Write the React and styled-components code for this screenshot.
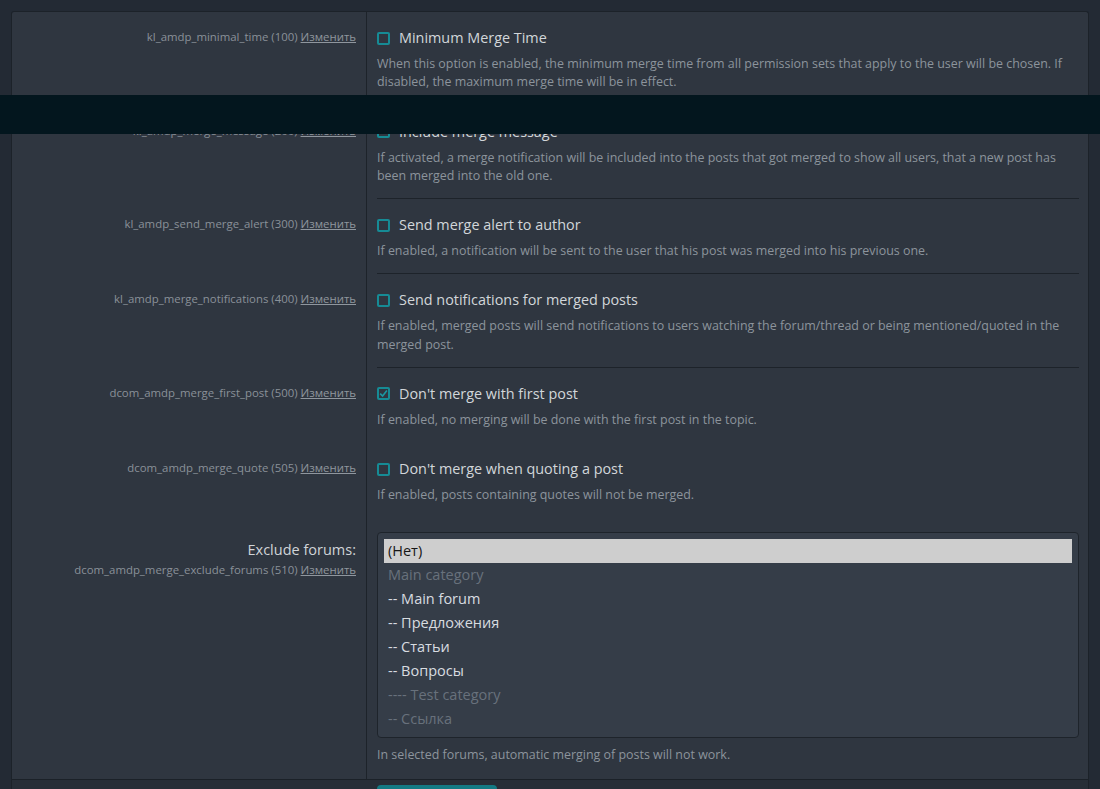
import React from "react";
import styled, { createGlobalStyle } from "styled-components";

const GlobalStyle = createGlobalStyle`
  html, body {
    margin: 0;
    padding: 0;
    background: #232a34;
  }
  body {
    font-family: "Open Sans", "Noto Sans", sans-serif;
    color: #d2d6da;
  }
  * { box-sizing: border-box; }
`;

const rows = [
  {
    key: "kl_amdp_minimal_time",
    order: 100,
    title: "Minimum Merge Time",
    explain:
      "When this option is enabled, the minimum merge time from all permission sets that apply to the user will be chosen. If disabled, the maximum merge time will be in effect.",
    sep: true,
  },
  {
    key: "kl_amdp_merge_message",
    order: 200,
    title: "Include merge message",
    explain:
      "If activated, a merge notification will be included into the posts that got merged to show all users, that a new post has been merged into the old one.",
    sep: true,
  },
  {
    key: "kl_amdp_send_merge_alert",
    order: 300,
    title: "Send merge alert to author",
    explain: "If enabled, a notification will be sent to the user that his post was merged into his previous one.",
    sep: true,
  },
  {
    key: "kl_amdp_merge_notifications",
    order: 400,
    title: "Send notifications for merged posts",
    explain:
      "If enabled, merged posts will send notifications to users watching the forum/thread or being mentioned/quoted in the merged post.",
    sep: true,
  },
  {
    key: "dcom_amdp_merge_first_post",
    order: 500,
    title: "Don't merge with first post",
    explain: "If enabled, no merging will be done with the first post in the topic.",
    checked: true,
  },
  {
    key: "dcom_amdp_merge_quote",
    order: 505,
    title: "Don't merge when quoting a post",
    explain: "If enabled, posts containing quotes will not be merged.",
  },
];

const forums = [
  { label: "(Нет)", selected: true },
  { label: "Main category", disabled: true },
  { label: "-- Main forum" },
  { label: "-- Предложения" },
  { label: "-- Статьи" },
  { label: "-- Вопросы" },
  { label: "---- Test category", disabled: true },
  { label: "-- Ссылка", disabled: true },
];

const Page = styled.div`
  padding: 11px 11px 0;
  min-height: 789px;
`;

const Block = styled.div`
  background: #2f3640;
  border: 1px solid #1c2229;
  border-bottom: none;
  border-radius: 3px 3px 0 0;
  overflow: hidden;
`;

const Row = styled.div`
  display: grid;
  grid-template-columns: 355px 1fr;
`;

const Term = styled.div`
  padding: ${(p) => p.$top}px 10px 0;
  text-align: right;
  border-right: 1px solid #1d232a;
`;

const TermLabel = styled.div`
  font-size: 14.5px;
  line-height: 20px;
  color: #d0d4d8;
`;

const Hint = styled.div`
  font-size: 11.4px;
  line-height: 16px;
  color: #8a9199;
  margin-top: ${(p) => p.$gap || 0}px;

  a {
    color: #8f969e;
    text-decoration: underline;
  }
`;

const Desc = styled.div`
  padding: 0 9px 0 10px;
`;

const DescInner = styled.div`
  padding: ${(p) => p.$top ?? 16}px 0 13px;
  border-bottom: 1px solid ${(p) => (p.$sep ? "#1d232a" : "transparent")};
`;

const CheckLabel = styled.label`
  display: flex;
  align-items: center;
  gap: 9px;
  font-size: 14.4px;
  line-height: 20px;
  color: #d2d6da;
`;

const Box = styled.span`
  width: 13px;
  height: 13px;
  border: 2px solid #168b95;
  border-radius: 2px;
  display: inline-flex;
  align-items: center;
  justify-content: center;
  flex: none;
`;

const Explain = styled.div`
  margin-top: ${(p) => p.$top ?? 7}px;
  font-size: 12.45px;
  line-height: 18.25px;
  color: #8c949c;
`;

const ListBox = styled.div`
  border: 1px solid #1e242b;
  border-radius: 4px;
  background: #353d48;
  padding: 6px;
`;

const Option = styled.div`
  height: 24px;
  line-height: 24px;
  padding: 0 4px;
  font-size: 14.5px;
  color: ${(p) => (p.$selected ? "#161616" : p.$disabled ? "#68717c" : "#d8dce0")};
  background: ${(p) => (p.$selected ? "#cecece" : "transparent")};
`;

const Footer = styled.div`
  display: grid;
  grid-template-columns: 355px 1fr;
  background: #272e37;
  border-top: 1px solid #1b2128;
  padding-top: 5px;
  min-height: 20px;
`;

const SaveButton = styled.button`
  grid-column: 2;
  margin-left: 10px;
  width: 120px;
  height: 34px;
  border: none;
  border-radius: 4px;
  background: #137a84;
  color: #ffffff;
  font-family: inherit;
  font-size: 14px;
`;

const StickyBar = styled.div`
  position: fixed;
  top: 95px;
  left: 0;
  right: 0;
  height: 39px;
  background: #03161e;
  z-index: 10;
`;

const Check = ({ checked }) => (
  <Box>
    {checked && (
      <svg width="9" height="9" viewBox="0 0 9 9">
        <path d="M1.2 4.6 L3.6 7 L7.9 1.6" fill="none" stroke="#1a98a3" strokeWidth="1.6" />
      </svg>
    )}
  </Box>
);

const OptionHint = ({ name, order }) => (
  <>
    {name} ({order}) <a href="#">Изменить</a>
  </>
);

export default function App() {
  return (
    <>
      <GlobalStyle />
      <Page>
        <Block>
          {rows.map((r) => (
            <Row key={r.key}>
              <Term $top={17}>
                <Hint>
                  <OptionHint name={r.key} order={r.order} />
                </Hint>
              </Term>
              <Desc>
                <DescInner $sep={r.sep}>
                  <CheckLabel>
                    <Check checked={r.checked} />
                    {r.title}
                  </CheckLabel>
                  <Explain>{r.explain}</Explain>
                </DescInner>
              </Desc>
            </Row>
          ))}
          <Row>
            <Term $top={22}>
              <TermLabel>Exclude forums:</TermLabel>
              <Hint $gap={2}>
                <OptionHint name="dcom_amdp_merge_exclude_forums" order={510} />
              </Hint>
            </Term>
            <Desc>
              <DescInner $top={14}>
                <ListBox>
                  {forums.map((f) => (
                    <Option key={f.label} $selected={f.selected} $disabled={f.disabled}>
                      {f.label}
                    </Option>
                  ))}
                </ListBox>
                <Explain $top={8}>In selected forums, automatic merging of posts will not work.</Explain>
              </DescInner>
            </Desc>
          </Row>
          <Footer>
            <SaveButton>Сохранить</SaveButton>
          </Footer>
        </Block>
      </Page>
      <StickyBar />
    </>
  );
}
